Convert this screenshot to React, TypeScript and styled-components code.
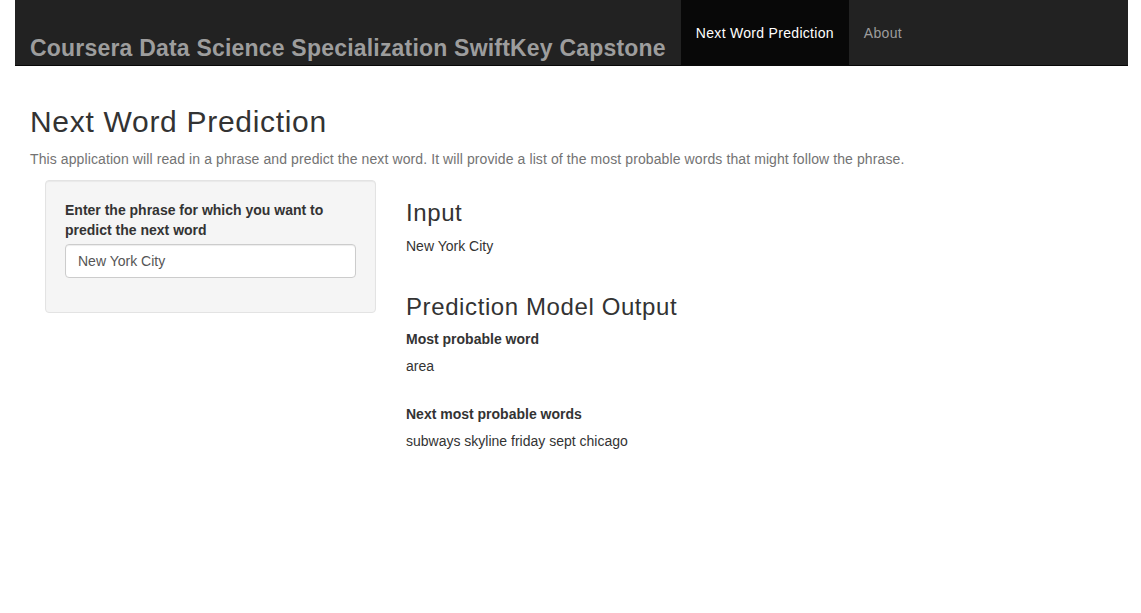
import styled, { createGlobalStyle } from 'styled-components';

const GlobalStyle = createGlobalStyle`
  html, body {
    margin: 0;
    padding: 0;
    background: #fff;
  }
  body {
    font-family: "Liberation Sans", Arial, Helvetica, sans-serif;
    font-size: 14px;
    line-height: 20px;
    color: #333;
  }
  * {
    box-sizing: border-box;
  }
`;

const Container = styled.div`
  padding: 0 13px 0 15px;
`;

const Navbar = styled.nav`
  display: flex;
  align-items: stretch;
  height: 66px;
  background: #222;
  border-bottom: 1px solid #080808;
`;

const Brand = styled.div`
  display: flex;
  align-items: flex-end;
  padding: 0 15px 4px;
  font-size: 23px;
  font-weight: bold;
  letter-spacing: 0.2px;
  line-height: 26px;
  color: #9d9d9d;
  white-space: nowrap;
`;

const NavList = styled.ul`
  display: flex;
  margin: 0;
  padding: 0;
  list-style: none;
`;

const NavLink = styled.li<{ $active?: boolean }>`
  padding: 23px 15px 0;
  line-height: 20px;
  letter-spacing: 0.3px;
  color: ${(p) => (p.$active ? '#fff' : '#9d9d9d')};
  background: ${(p) => (p.$active ? '#080808' : 'transparent')};
  white-space: nowrap;
`;

const Content = styled.main`
  padding: 0 15px;
`;

const Title = styled.h2`
  margin: 39px 0 0;
  font-size: 30px;
  font-weight: 500;
  letter-spacing: 0.7px;
  line-height: 33px;
`;

const HelpText = styled.p`
  margin: 11px 0 0;
  color: #737373;
  letter-spacing: 0.1px;
`;

const Row = styled.div`
  display: grid;
  grid-template-columns: 361px 1fr;
  margin-top: 11px;
`;

const Column = styled.div`
  padding: 0 15px;
`;

const Well = styled.div`
  min-height: 20px;
  padding: 19px;
  background: #f5f5f5;
  border: 1px solid #e3e3e3;
  border-radius: 4px;
  box-shadow: inset 0 1px 1px rgba(0, 0, 0, 0.05);
`;

const Label = styled.label`
  display: block;
  margin-bottom: 4px;
  font-weight: bold;
`;

const Input = styled.input`
  display: block;
  width: 100%;
  height: 34px;
  margin-bottom: 15px;
  padding: 6px 12px;
  font-family: inherit;
  font-size: 14px;
  color: #555;
  background: #fff;
  border: 1px solid #ccc;
  border-radius: 4px;
  box-shadow: inset 0 1px 1px rgba(0, 0, 0, 0.075);
  outline: none;
`;

const SectionTitle = styled.h3<{ $first?: boolean }>`
  margin: ${(p) => (p.$first ? '20px' : '38px')} 0 ${(p) => (p.$first ? '10px' : '9px')};
  font-size: 24px;
  font-weight: 500;
  letter-spacing: 0.6px;
  line-height: 26px;
`;

const OutputText = styled.div<{ $gap?: number }>`
  margin-bottom: ${(p) => p.$gap ?? 0}px;
`;

const OutputLabel = styled.div`
  margin-bottom: 7px;
  font-weight: bold;
`;

export default function App() {
  return (
    <>
      <GlobalStyle />
      <Container>
        <Navbar>
          <Brand>Coursera Data Science Specialization SwiftKey Capstone</Brand>
          <NavList>
            <NavLink $active>Next Word Prediction</NavLink>
            <NavLink>About</NavLink>
          </NavList>
        </Navbar>
        <Content>
          <Title>Next Word Prediction</Title>
          <HelpText>
            This application will read in a phrase and predict the next word. It will provide a list of the most
            probable words that might follow the phrase.
          </HelpText>
          <Row>
            <Column>
              <Well>
                <Label htmlFor="phrase">Enter the phrase for which you want to predict the next word</Label>
                <Input id="phrase" type="text" defaultValue="New York City" />
              </Well>
            </Column>
            <Column>
              <SectionTitle $first>Input</SectionTitle>
              <OutputText>New York City</OutputText>
              <SectionTitle>Prediction Model Output</SectionTitle>
              <OutputLabel>Most probable word</OutputLabel>
              <OutputText $gap={28}>area</OutputText>
              <OutputLabel>Next most probable words</OutputLabel>
              <OutputText>subways skyline friday sept chicago</OutputText>
            </Column>
          </Row>
        </Content>
      </Container>
    </>
  );
}
